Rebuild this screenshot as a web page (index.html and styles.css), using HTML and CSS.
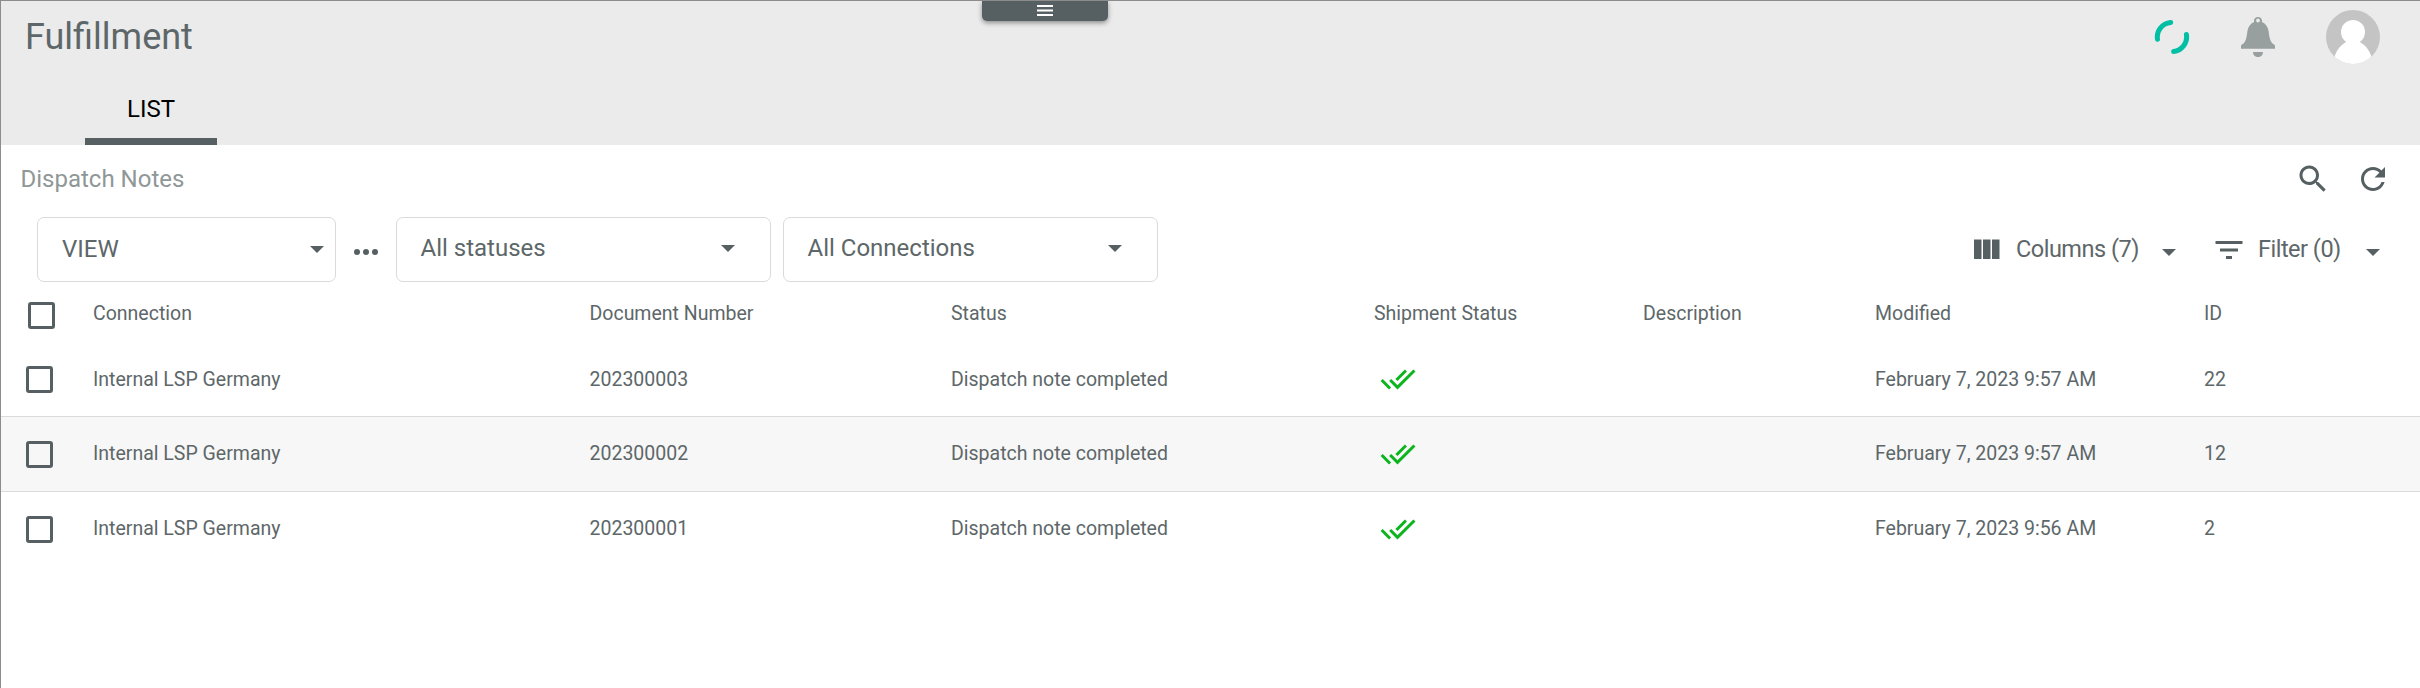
FILE: index.html
```html
<!DOCTYPE html>
<html lang="en">
<head>
<meta charset="utf-8">
<title>Fulfillment</title>
<link rel="stylesheet" href="styles.css">
</head>
<body>
<svg width="0" height="0" class="defs" aria-hidden="true">
  <symbol id="done" viewBox="0 0 24 24"><path d="M18 7l-1.41-1.41-6.34 6.34 1.41 1.41L18 7zm4.24-1.41L11.66 16.17 7.48 12l-1.41 1.41L11.66 19l12-12-1.42-1.41zM.41 13.41L6 19l1.41-1.41L1.83 12 .41 13.41z"/></symbol>
  <symbol id="caret" viewBox="0 0 14 7"><path d="M0 0h14l-7 7z"/></symbol>
</svg>
<div class="app">
  <button class="pull" aria-label="Menu"><svg width="16" height="11" viewBox="0 0 16 11"><path d="M0 0h16v2H0zM0 4.5h16v2H0zM0 9h16v2H0z"/></svg></button>
  <header class="header">
    <div class="topbar">
      <h1 class="title">Fulfillment</h1>
      <div class="tools">
        <svg class="spinner" width="36" height="36" viewBox="-18 -18 36 36"><path d="M-1.3 -14.6A14.6 14.6 0 0 0 -14.5 2.3M14.4 -2.5A14.6 14.6 0 0 1 1.6 14.5"/></svg>
        <svg class="bell" width="34" height="40" viewBox="0 0 34 40"><path fill-rule="evenodd" d="M17 0c2.3 0 4 1.700 4 3.700v1.200c3.800 1.700 6 5 6.600 9.300.6 5 1.200 9.200 3.400 11.900.8 1 3 1.500 3 3.200V31.700H0V29.300c0-1.700 2.200-2.200 3-3.200 2.200-2.700 2.800-6.900 3.400-11.900C7 9.900 9.200 6.600 13 4.900V3.700C13 1.700 14.700 0 17 0zm0 1.600a1.900 1.900 0 1 0 0 3.800 1.900 1.900 0 0 0 0-3.800z"/><path d="M12 35h10c0 3-2.200 5-5 5s-5-2-5-5z"/></svg>
        <svg class="avatar" width="54" height="54" viewBox="0 0 54 54"><clipPath id="disc"><circle cx="27" cy="27" r="27"/></clipPath><g clip-path="url(#disc)"><path fill="#c4c4c4" d="M0 0h54v54H0z"/><circle cx="27" cy="22" r="12" fill="#fff"/><path fill="#fff" d="M20.500 30.500h13c0 1 1 2 2.500 3 4 2.500 7 6.500 9.500 13L41 54H13l-4.500-7.500c2.500-6.500 5.500-10.500 9.500-13 1.500-1 2.500-2 2.500-3z"/></g></svg>
      </div>
    </div>
    <nav class="tabs"><a class="tab">LIST</a></nav>
  </header>
  <main>
    <div class="heading">
      <h2 class="subtitle">Dispatch Notes</h2>
      <div class="actions">
        <svg width="36" height="36" viewBox="0 0 24 24"><path d="M15.500 14h-.79l-.28-.27C15.410 12.590 16 11.110 16 9.500 16 5.910 13.090 3 9.500 3S3 5.910 3 9.500 5.910 16 9.500 16c1.610 0 3.090-.59 4.230-1.570l.27.28v.79l5 4.990L20.490 19l-4.990-5zm-6 0C7.010 14 5 11.990 5 9.500S7.010 5 9.500 5 14 7.010 14 9.500 11.990 14 9.500 14z"/></svg>
        <svg width="36" height="36" viewBox="0 0 24 24"><path d="M17.650 6.350C16.200 4.900 14.210 4 12 4c-4.420 0-7.990 3.580-7.990 8s3.570 8 7.990 8c3.730 0 6.840-2.550 7.730-6h-2.080c-.82 2.330-3.040 4-5.650 4-3.310 0-6-2.690-6-6s2.690-6 6-6c1.660 0 3.140.69 4.220 1.780L13 11h7V4l-2.350 2.350z"/></svg>
      </div>
    </div>
    <div class="controls">
      <div class="select view"><span>VIEW</span><svg class="caret"><use href="#caret"/></svg></div>
      <svg class="dots" width="24" height="6" viewBox="0 0 24 6"><circle cx="3" cy="3" r="3"/><circle cx="12" cy="3" r="3"/><circle cx="21" cy="3" r="3"/></svg>
      <div class="select wide"><span>All statuses</span><svg class="caret"><use href="#caret"/></svg></div>
      <div class="select wide"><span>All Connections</span><svg class="caret"><use href="#caret"/></svg></div>
      <div class="menus">
        <div class="menu columns"><svg width="36" height="36" viewBox="0 0 24 24"><path d="M10 18h5V5h-5v13zm-6 0h5V5H4v13zM16 5v13h5V5h-5z"/></svg><span>Columns (7)</span><svg class="caret"><use href="#caret"/></svg></div>
        <div class="menu filter"><svg width="36" height="36" viewBox="0 0 24 24"><path d="M10 18h4v-2h-4v2zM3 6v2h18V6H3zm3 7h12v-2H6v2z"/></svg><span>Filter (0)</span><svg class="caret"><use href="#caret"/></svg></div>
      </div>
    </div>
    <div class="table">
      <div class="row head"><i class="box"></i><span>Connection</span><span>Document Number</span><span>Status</span><span>Shipment Status</span><span>Description</span><span>Modified</span><span>ID</span></div>
      <div class="row"><i class="box"></i><span>Internal LSP Germany</span><span>202300003</span><span>Dispatch note completed</span><svg class="done"><use href="#done"/></svg><span></span><span>February 7, 2023 9:57 AM</span><span>22</span></div>
      <div class="row alt"><i class="box"></i><span>Internal LSP Germany</span><span>202300002</span><span>Dispatch note completed</span><svg class="done"><use href="#done"/></svg><span></span><span>February 7, 2023 9:57 AM</span><span>12</span></div>
      <div class="row last"><i class="box"></i><span>Internal LSP Germany</span><span>202300001</span><span>Dispatch note completed</span><svg class="done"><use href="#done"/></svg><span></span><span>February 7, 2023 9:56 AM</span><span>2</span></div>
    </div>
  </main>
</div>
</body>
</html>
```
FILE: styles.css
```css
* { box-sizing: border-box; }
body { margin: 0; background: #fff; color: #5d6769; font-family: Roboto, sans-serif; font-size: 24px; }
svg { display: block; flex: none; fill: #566062; }
.defs { position: absolute; }
.app { position: relative; height: 688px; overflow: hidden; border-top: 1px solid #8c8c8c; border-left: 1px solid #8c8c8c; }
.header { height: 144px; background: #ebebeb; display: flex; flex-direction: column; justify-content: space-between; }
.topbar { display: flex; justify-content: space-between; padding: 0 40px 0 24px; height: 72px; align-items: center; }
.title { margin: 0; font-size: 36px; font-weight: 400; line-height: 42px; }
.tools { display: flex; align-items: center; }
.spinner { fill: none; stroke: #00bfa5; stroke-width: 5; stroke-linecap: round; margin-right: 51px; }
.bell { fill: #98a09f; margin-right: 51px; }
.pull { position: absolute; top: 0; left: 981px; width: 126px; height: 20px; border: 0; padding: 4px 0 0; border-radius: 0 0 5px 5px; background: #566062; box-shadow: 0 2px 5px rgba(0,0,0,.4); display: flex; justify-content: center; align-items: flex-start; }
.pull svg { fill: #fff; }
.tabs { display: flex; padding-left: 84px; }
.tab { width: 132px; height: 60px; border-bottom: 7px solid #566062; color: #000; text-align: center; line-height: 48px; }
.heading { display: flex; justify-content: space-between; padding: 16px 29px 0 19.5px; height: 72px; }
.subtitle { margin: 0; font-size: 24px; font-weight: 400; line-height: 36px; color: #8f9797; }
.actions { display: flex; gap: 24px; }
.controls { display: flex; padding-left: 36px; height: 65px; }
.select { height: 65px; border: 1px solid #dadada; border-radius: 7px; display: flex; justify-content: space-between; align-items: center; }
.caret { width: 14px; height: 7px; }
.view { width: 299px; padding: 0 11px 0 24px; }
.view span { padding-bottom: 1px; }
.wide { width: 375px; padding: 0 35px 2px 23.5px; margin-right: 12px; }
.wide span { padding-bottom: 2px; }
.dots { margin: 32px 18px 0; }
.menus { display: flex; margin-left: auto; padding-right: 40px; gap: 35px; align-items: center; height: 65px; }
.menu { display: flex; align-items: center; font-size: 23.5px; letter-spacing: -0.5px; }
.menu > .caret { margin: 6px 0 0; }
.menu span { padding-bottom: 2px; white-space: nowrap; }
.columns span { width: 122px; margin: 0 24px 0 12px; }
.filter span { width: 84px; margin: 0 24px 0 11px; }
.row { display: grid; grid-template-columns: 67px 496.5px 361.5px 423px 269px 232px 329px 1fr; padding-left: 25px; height: 75px; border-bottom: 1px solid #dadada; font-size: 19.5px; line-height: 24px; align-items: start; padding-top: 24px; }
.row > span { white-space: nowrap; padding-top: 2px; }
.head { height: 60px; border: 0; padding-top: 19px; }
.head > span { padding-top: 1px; }
.alt { background: #f7f7f7; }
.alt > span, .last > span { padding-top: 1px; }
.last { border: 0; }
.box { width: 27px; height: 27px; border: 3px solid #566062; border-radius: 3px; }
.head .box { margin: 1px 0 0 2px; }
.done { width: 36px; height: 36px; fill: #0ab51d; margin: -5px 0 0 6px; }
```
